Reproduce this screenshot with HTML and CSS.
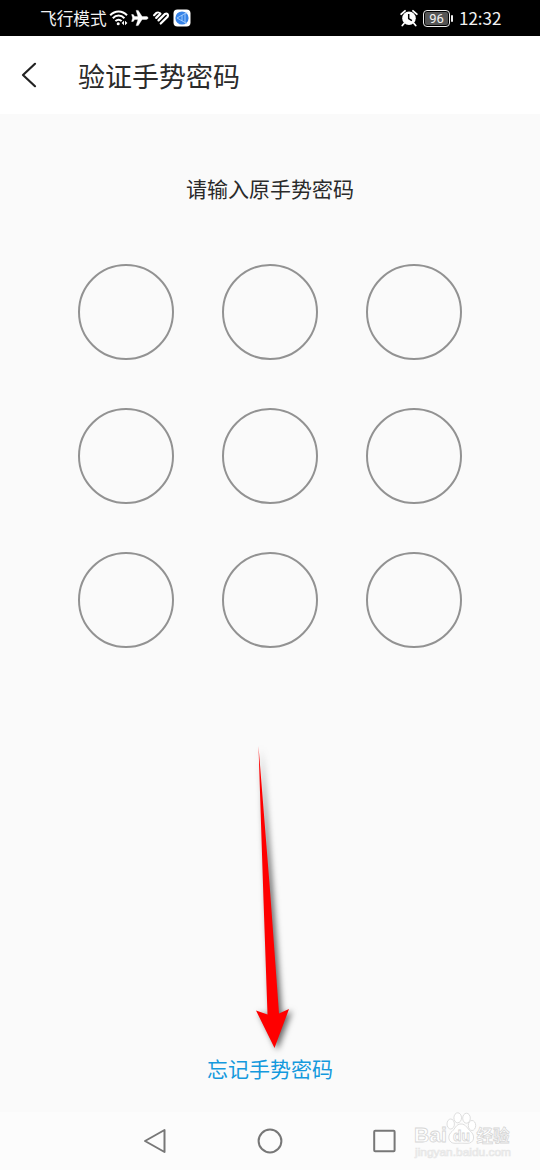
FILE: index.html
```html
<!DOCTYPE html>
<html lang="zh-CN">
<head>
    <meta charset="UTF-8">
    <meta name="viewport" content="width=device-width, initial-scale=1.0">
    <title>验证手势密码</title>
    <link rel="stylesheet" href="styles.css">
</head>
<body>

<div class="status-bar">
    <div class="status-left">
        <span class="status-text">飞行模式</span>
        <svg class="icon-wifi" width="20" height="18" viewBox="0 0 20 18">
            <path d="M1.2 6.2C6 1.1 13.2 1.1 18 6.2M3.8 9.2C7.2 5.7 12 5.7 15.4 9.2M6.4 12.1C8.3 10.2 10.8 10.2 12.6 12.1" fill="none" stroke="#fff" stroke-width="2"/>
            <circle cx="9.2" cy="14.8" r="1.5" fill="#fff"/>
            <path d="M15 11.8v4.4l-2.4-2.2zM16 11.8v4.4l2.4-2.2z" fill="#fff"/>
        </svg>
        <svg class="icon-plane" width="18" height="18" viewBox="0 0 18 18">
            <path d="M17 9c0-.9-.8-1.4-1.7-1.4h-4.2L7.2 1.4H5.1l1.9 6.2H3.7L2.2 5.5H.6L1.6 9 .6 12.5h1.6l1.5-2.1H7l-1.9 6.2h2.1l3.9-6.2h4.2c.9 0 1.7-.5 1.7-1.4z" fill="#fff" stroke="#fff" stroke-width=".4"/>
        </svg>
        <svg class="icon-health" width="18" height="18" viewBox="0 0 18 18">
            <path d="M2.1 6.2 4.3 4M4.2 8.9 8.4 4.7M6.5 11.4 13 4.9C15 3.9 16.700 5.500 15.700 7.500L8.700 14.500" fill="none" stroke="#fff" stroke-width="2.2" stroke-linecap="round"/>
            <path d="M4.300 4C5.500 3.200 7.200 3.400 8.400 4.700" fill="none" stroke="#fff" stroke-width="1.8"/>
        </svg>
        <svg class="icon-app" width="18" height="18" viewBox="0 0 18 18">
            <rect x=".5" y=".5" width="17" height="17" rx="4" fill="#fff"/>
            <circle cx="9" cy="9" r="6.6" fill="#3683e8"/>
            <path d="M4 9l8-4.5v9zM9 6v6M12 4.5l2.5-.7M12 13.5l2 1" fill="none" stroke="#a5cdfa" stroke-width=".9"/>
        </svg>
    </div>
    <div class="status-right">
        <svg class="icon-alarm" width="18" height="18" viewBox="0 0 18 18">
            <circle cx="9" cy="9.2" r="6.8" fill="#fff"/>
            <path d="M1.2 5.2 5 1.8M16.8 5.2 13 1.8M4 14.5l-1.7 2M14 14.5l1.7 2" stroke="#fff" stroke-width="1.8" stroke-linecap="round"/>
            <path d="M8.7 5v4.6l3.2 2" fill="none" stroke="#000" stroke-width="1.5"/>
        </svg>
        <div class="battery"><span class="battery-level">96</span></div>
        <span class="battery-cap"></span>
        <span class="clock">12:32</span>
    </div>
</div>

<header class="title-bar">
    <svg class="back-icon" width="16" height="26" viewBox="0 0 16 26">
        <path d="M14 1.8 2 13l12 11.2" fill="none" stroke="#222" stroke-width="2.2" stroke-linecap="round" stroke-linejoin="round"/>
    </svg>
    <h1>验证手势密码</h1>
</header>

<main class="content">
    <p class="prompt">请输入原手势密码</p>
    <div class="gesture-grid">
        <span class="dot"></span>
        <span class="dot"></span>
        <span class="dot"></span>
        <span class="dot"></span>
        <span class="dot"></span>
        <span class="dot"></span>
        <span class="dot"></span>
        <span class="dot"></span>
        <span class="dot"></span>
    </div>
    <a class="forgot-link">忘记手势密码</a>
    <svg class="arrow" width="60" height="320" viewBox="0 0 60 320">
        <path d="M18.5 6 30 150 39 273.5 49 269 34.5 308 16 270.5 27.5 274.5 23.5 160z" fill="#fe0000"/>
    </svg>
</main>

<nav class="nav-bar">
    <svg width="24" height="26" viewBox="0 0 24 26">
        <path d="M21.5 2v22L2 13z" fill="none" stroke="#777" stroke-width="2" stroke-linejoin="round"/>
    </svg>
    <svg width="26" height="26" viewBox="0 0 26 26">
        <circle cx="13" cy="13" r="11.4" fill="none" stroke="#777" stroke-width="2"/>
    </svg>
    <svg width="24" height="26" viewBox="0 0 24 26">
        <rect x="1.2" y="2.7" width="20.4" height="20.6" rx="1" fill="none" stroke="#777" stroke-width="2"/>
    </svg>
    <svg class="watermark" width="110" height="56" viewBox="0 0 110 56">
        <g class="mark">
            <text class="mark-logo" x="4" y="30" textLength="33" lengthAdjust="spacingAndGlyphs">Bai</text>
            <ellipse cx="40.7" cy="12" rx="3.7" ry="5"/>
            <ellipse cx="47.7" cy="5.8" rx="3.8" ry="5"/>
            <ellipse cx="56.5" cy="6.2" rx="3.8" ry="5"/>
            <ellipse cx="62" cy="13.5" rx="3.7" ry="5"/>
            <path d="M51 12c-5 0-6 5-9 7.5-5.500 4-3.500 12 3 11.800 4-.2 8-.2 12 0 7.500.3 8.500-8 3.500-12-3.200-2.500-4.500-7.300-9.500-7.300z"/>
            <text class="mark-du" x="43" y="28.5" textLength="17" lengthAdjust="spacingAndGlyphs">du</text>
            <text class="mark-cn" x="66.5" y="30" textLength="33" lengthAdjust="spacingAndGlyphs">经验</text>
            <text class="mark-url" x="5" y="44" textLength="96" lengthAdjust="spacingAndGlyphs">jingyan.baidu.com</text>
        </g>
    </svg>
</nav>

</body>
</html>
```
FILE: styles.css
```css
* {
    box-sizing: border-box;
}
body {
    margin: 0;
    height: 1170px;
    display: flex;
    flex-direction: column;
    background: #fafafa;
    font-family: "Noto Sans CJK SC", sans-serif;
    color: #2a2a2a;
    overflow: hidden;
}
.status-bar {
    height: 36px;
    padding: 0 38px 0 40px;
    display: flex;
    justify-content: space-between;
    background: #000;
    color: #f2f2f2;
}
.status-left, .status-right {
    display: flex;
    align-items: center;
}
.status-text {
    width: 67px;
    font-size: 16.7px;
    line-height: 36px;
    white-space: nowrap;
}
.icon-wifi {
    margin-left: 2px;
}
.icon-plane {
    margin-left: 2px;
}
.icon-health {
    margin-left: 3px;
}
.icon-app {
    margin-left: 3px;
}
.battery {
    width: 27px;
    height: 17px;
    margin-left: 5px;
    padding: 1px;
    border: 1.5px solid #eee;
    border-radius: 4px;
}
.battery-level {
    display: block;
    height: 100%;
    border-radius: 2px;
    background: #555;
    font-family: Roboto, sans-serif;
    font-size: 13px;
    line-height: 14px;
    text-align: center;
}
.battery-cap {
    width: 2px;
    height: 7px;
    margin-left: 1px;
    border-radius: 1px;
    background: #eee;
}
.clock {
    width: 43px;
    margin-left: 6px;
    font-size: 17px;
    line-height: 36px;
    white-space: nowrap;
}
.title-bar {
    height: 78px;
    padding-left: 21px;
    display: flex;
    align-items: center;
    background: #fff;
}
.title-bar h1 {
    margin: 2px 0 0 41px;
    font-size: 27px;
    font-weight: 400;
    line-height: 40px;
}
.content {
    position: relative;
    height: 998px;
    display: flex;
    flex-direction: column;
    align-items: center;
}
.prompt {
    margin: 59px 0 0;
    font-size: 21px;
    line-height: 30px;
}
.gesture-grid {
    margin-top: 61px;
    display: grid;
    grid-template-columns: repeat(3, 96px);
    gap: 48px;
}
.dot {
    height: 96px;
    border: 2px solid #929292;
    border-radius: 50%;
}
.forgot-link {
    margin-top: auto;
    margin-bottom: 29px;
    font-size: 21px;
    line-height: 30px;
    color: #1499dd;
}
.arrow {
    position: absolute;
    left: 240px;
    top: 626px;
    filter: drop-shadow(3px 2px 3px rgba(0, 0, 0, 0.6));
}
.nav-bar {
    position: relative;
    height: 58px;
    padding: 0 143px;
    display: flex;
    align-items: center;
    justify-content: space-between;
    background: #fcfcfc;
}
.watermark {
    position: absolute;
    left: 410px;
    top: 0;
}
.mark {
    fill: #fff;
    stroke: #d6d6d6;
    stroke-width: 0.8;
}
.mark-logo {
    font-family: "Liberation Sans", sans-serif;
    font-size: 21px;
    font-weight: 700;
}
.mark-du {
    font-family: "Liberation Sans", sans-serif;
    font-size: 15px;
    font-weight: 700;
}
.mark-cn {
    font-family: "Noto Sans CJK SC", sans-serif;
    font-size: 17px;
    font-weight: 700;
}
.mark-url {
    font-family: "Liberation Sans", sans-serif;
    font-size: 10.5px;
    stroke: #e6e6e6;
    stroke-width: 0.7;
}
```
